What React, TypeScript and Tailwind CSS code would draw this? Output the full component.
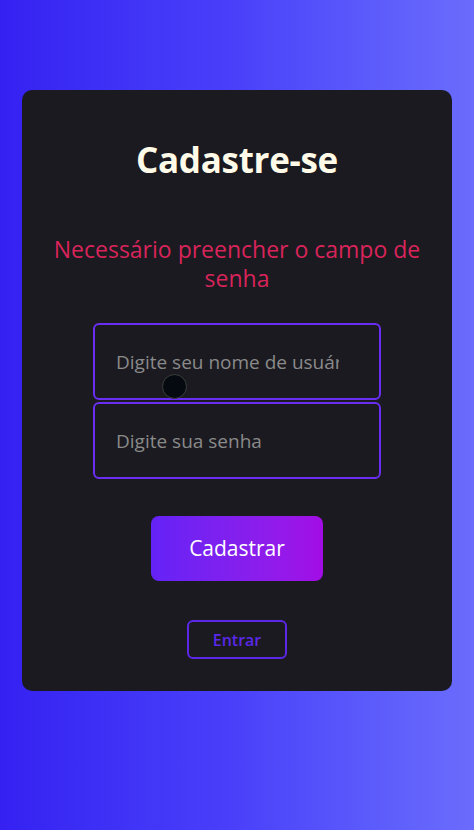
import React from "react";

export default function App() {
  return (
    <div
      className="w-[474px] h-[830px] flex flex-col items-center pt-[90px] bg-gradient-to-r from-[#3520f2] via-[#4a40fa] to-[#6b6cfc]"
      style={{ fontFamily: '"Open Sans", "DejaVu Sans", sans-serif' }}
    >
      <div className="relative w-[430px] h-[601px] bg-[#1a1a20] rounded-[10px] flex flex-col items-center">
        <h1 className="mt-[48px] text-[35px] leading-[44px] font-bold text-[#fffbe8] tracking-[-0.3px]">
          Cadastre-se
        </h1>
        <p className="mt-[53px] w-[400px] text-center text-[23px] leading-[29px] text-[#d8245a]">
          Necessário preencher o campo de senha
        </p>
        <div className="mt-[30px] flex flex-col gap-[2px]">
          <input
            className="w-[288px] h-[77px] rounded-[6px] border-2 border-[#6a2ef2] bg-transparent pl-[21px] pr-[40px] text-[19px] text-[#999] placeholder:text-[#8a8a8a] outline-none"
            placeholder="Digite seu nome de usuário"
          />
          <input
            className="w-[288px] h-[77px] rounded-[6px] border-2 border-[#6a2ef2] bg-transparent pl-[21px] pr-[40px] text-[19px] text-[#999] placeholder:text-[#8a8a8a] outline-none"
            placeholder="Digite sua senha"
          />
        </div>
        <button className="mt-[37px] w-[172px] h-[65px] rounded-[8px] bg-gradient-to-r from-[#6422f6] to-[#a20ce6] text-white text-[21px]">
          Cadastrar
        </button>
        <button className="mt-[39px] w-[100px] h-[39px] rounded-[6px] border-2 border-[#5a28e6] text-[#5a28e6] text-[16px] font-semibold">
          Entrar
        </button>
        <div className="absolute left-[140px] top-[284px] w-[25px] h-[25px] rounded-full bg-[#050a10] border border-[#3a3f3a]" />
      </div>
    </div>
  );
}
